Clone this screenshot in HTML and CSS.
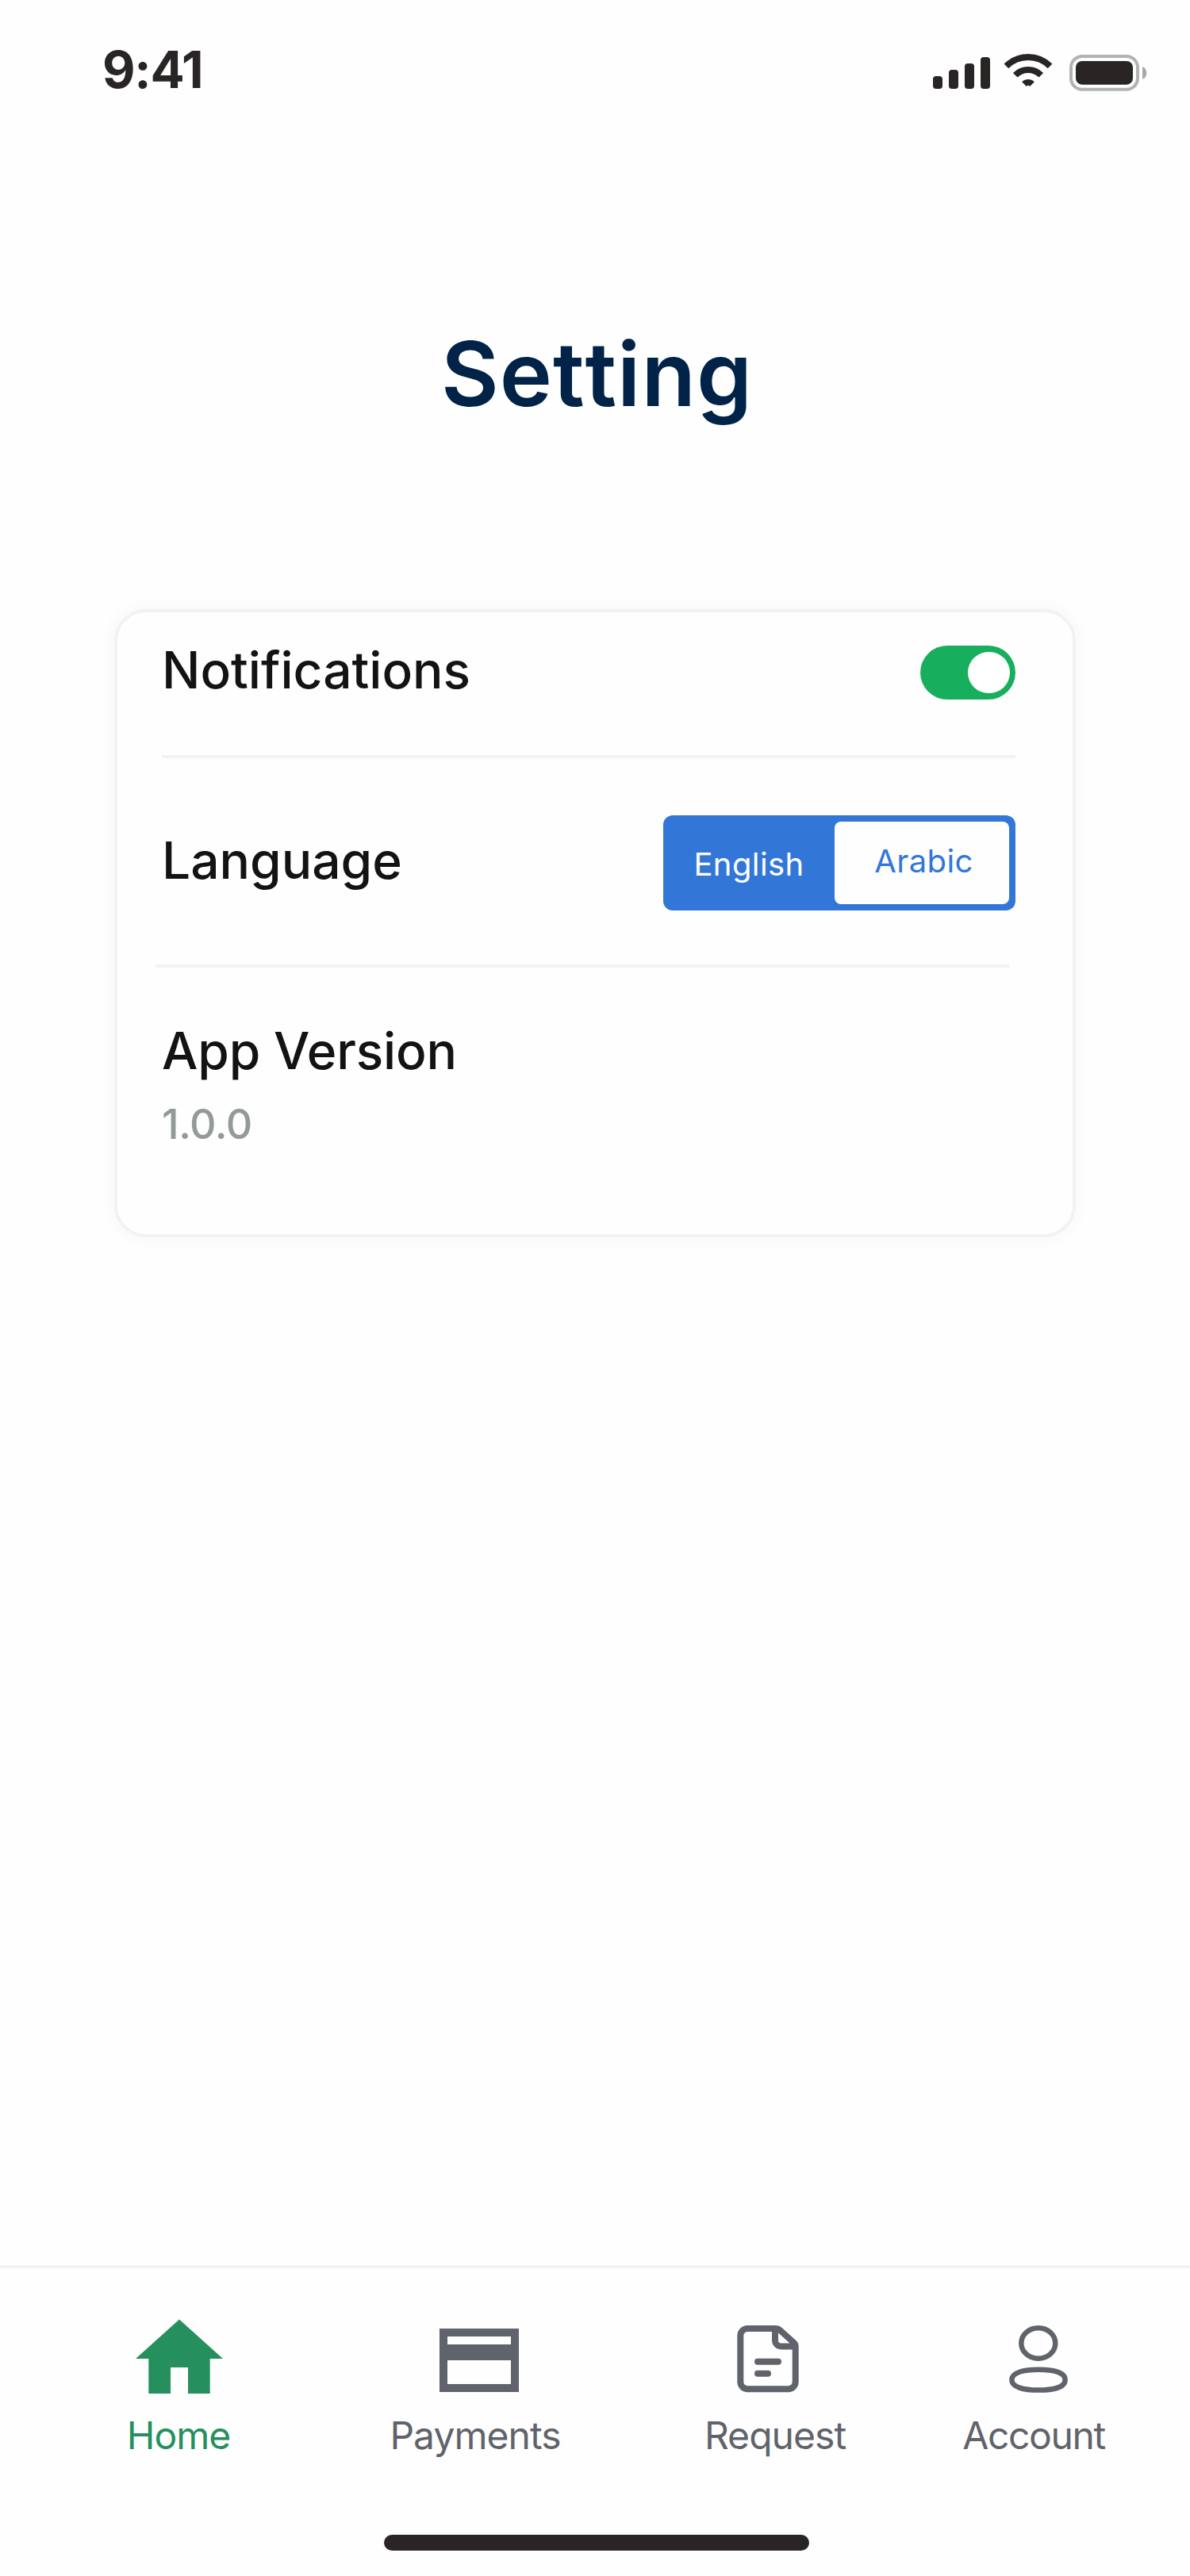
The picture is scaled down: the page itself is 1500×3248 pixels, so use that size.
FILE: index.html
```html
<!DOCTYPE html>
<html lang="en">
<head>
<meta charset="utf-8">
<title>Setting</title>
<link rel="stylesheet" href="styles.css">
</head>
<body>
<div class="screen">
  <header class="status">
    <span class="status-time">9:41</span>
    <svg class="status-icons" viewBox="0 0 272 56" aria-hidden="true">
      <g fill="#292525">
        <rect x="0" y="32" width="12" height="16" rx="4"/>
        <rect x="20" y="24" width="12" height="24" rx="4"/>
        <rect x="40" y="16" width="12" height="32" rx="4"/>
        <rect x="60" y="8" width="12" height="40" rx="4"/>
        <path d="M112.2 39.2A11 11 0 0 1 127.8 39.2L122.1 44.9A3 3 0 0 0 117.9 44.9Z"/>
        <rect x="180" y="13" width="72" height="29.7" rx="8"/>
      </g>
      <g fill="none" stroke="#292525" stroke-width="8">
        <path d="M92.4 19.4A39 39 0 0 1 147.6 19.4"/>
        <path d="M103.7 30.7A23 23 0 0 1 136.3 30.7"/>
      </g>
      <rect x="174" y="7" width="84" height="41.7" rx="14" fill="none" stroke="#b3b2b2" stroke-width="4"/>
      <path d="M264 20A8.7 8.7 0 0 1 264 36Z" fill="#a9a8a8"/>
    </svg>
  </header>

  <h1 class="title">Setting</h1>

  <main class="card">
    <section class="row row-notifications">
      <span class="label">Notifications</span>
      <span class="toggle"><span class="knob"></span></span>
    </section>
    <div class="divider"></div>
    <section class="row row-language">
      <span class="label">Language</span>
      <div class="segmented">
        <span class="segment segment-english">English</span>
        <span class="segment segment-arabic">Arabic</span>
      </div>
    </section>
    <div class="divider divider-offset"></div>
    <section class="version">
      <span class="label label-version">App Version</span>
      <span class="version-number">1.0.0</span>
    </section>
  </main>

  <footer class="footer">
    <nav class="tabs">
      <a class="tab tab-home">
        <svg class="tab-icon" viewBox="0 0 120 96" fill="currentColor"><path d="M61 .5L116 50H99.7V94H72V61H50V94H22.3V50H6Z"/></svg>
        <span>Home</span>
      </a>
      <a class="tab tab-payments">
        <svg class="tab-icon" viewBox="0 0 120 96" fill="currentColor" fill-rule="evenodd"><path d="M15 12H115V92H15ZM25 22V32H105V22ZM25 52V82H105V52Z"/></svg>
        <span>Payments</span>
      </a>
      <a class="tab tab-request">
        <svg class="tab-icon" viewBox="0 0 120 96" fill="none" stroke="currentColor" stroke-width="8" stroke-linecap="round"><path d="M60 12H25.3A9 9 0 0 0 16.3 21V79.3A9 9 0 0 0 25.3 88.3H76.7A9 9 0 0 0 85.7 79.3V35A7 7 0 0 0 83.4 29.6L66.5 14.4A9 9 0 0 0 60 12V27A7.5 7.5 0 0 0 67.5 34.4H85M38 53.7H64M38 68.7H51"/></svg>
        <span>Request</span>
      </a>
      <a class="tab tab-account">
        <svg class="tab-icon" viewBox="0 0 120 96" fill="none" stroke="currentColor" stroke-width="6.5"><ellipse cx="64.8" cy="30.5" rx="21.5" ry="19.3"/><path d="M65 63.8C84 63.8 98.6 67.5 98.6 76.7S84 89.6 65 89.6S31.4 85.9 31.4 76.7S46 63.8 65 63.8Z"/></svg>
        <span>Account</span>
      </a>
    </nav>
    <div class="home-indicator"></div>
  </footer>
</div>
</body>
</html>
```
FILE: styles.css
```css
* {
  box-sizing: border-box;
}

body {
  margin: 0;
  background: #fefefe;
  font-family: Inter, "Liberation Sans", sans-serif;
}

.screen {
  display: flex;
  flex-direction: column;
  width: 1500px;
  height: 3248px;
}

.status {
  display: flex;
  justify-content: space-between;
  padding: 49px 52px 0 129px;
  height: 136px;
}

.status-time {
  font-size: 64px;
  line-height: 77px;
  font-weight: 700;
  letter-spacing: -0.02em;
  color: #292525;
}

.status-icons {
  width: 272px;
  height: 56px;
  margin-top: 15px;
}

.title {
  margin: 267px 0 0;
  padding-left: 5px;
  font-size: 112px;
  line-height: 136px;
  font-weight: 600;
  font-kerning: none;
  letter-spacing: 1px;
  text-align: center;
  color: #012348;
}

.card {
  width: 1212px;
  height: 792px;
  margin: 229px 0 0 144px;
  border: 4px solid #f2f2f2;
  border-radius: 40px;
  box-shadow: 0 0 24px rgba(0, 0, 0, 0.04);
}

.row {
  display: flex;
  justify-content: space-between;
  align-items: flex-start;
  padding: 0 72px 0 56px;
}

.row-notifications {
  height: 180px;
  padding-top: 34px;
}

.row-language {
  height: 260px;
  padding-top: 72px;
}

.row-language .label {
  margin-top: 18px;
}

.label {
  font-size: 64px;
  line-height: 77px;
  font-weight: 500;
  color: #131313;
}

.label-version {
  letter-spacing: -0.15px;
}

.divider {
  height: 4px;
  margin: 0 72px 0 56px;
  background: #f2f2f2;
}

.divider-offset {
  margin: 0 80px 0 48px;
}

.toggle {
  display: flex;
  justify-content: flex-end;
  align-items: center;
  width: 120px;
  height: 68px;
  margin-top: 8px;
  padding-right: 7.5px;
  border-radius: 34px;
  background: #17af5d;
}

.knob {
  width: 52.8px;
  height: 52.8px;
  border-radius: 50%;
  background: #fff;
}

.segmented {
  display: flex;
  width: 444px;
  height: 120px;
  padding: 8px;
  border-radius: 12px;
  background: #3277d8;
}

.segment {
  font-size: 40px;
  line-height: 49px;
  font-weight: 400;
  letter-spacing: 0.01em;
  text-align: center;
}

.segment-english {
  width: 208px;
  padding: 29px 8px 0 0;
  color: #fff;
}

.segment-arabic {
  width: 220px;
  padding: 25px 0 0 5px;
  border-radius: 8px;
  background: #fefefe;
  color: #3277d8;
}

.version {
  display: flex;
  flex-direction: column;
  gap: 23px;
  padding: 66px 56px 0;
}

.version-number {
  font-size: 52px;
  line-height: 63px;
  font-weight: 500;
  letter-spacing: -0.45px;
  color: #949999;
}

.footer {
  margin-top: auto;
  height: 392px;
  border-top: 4px solid #f2f2f2;
}

.tabs {
  display: flex;
  padding: 64px 0 0 160px;
}

.tab {
  display: flex;
  flex-direction: column;
  align-items: center;
  gap: 21px;
  font-size: 48px;
  line-height: 59px;
  font-weight: 400;
  letter-spacing: -0.02em;
  white-space: nowrap;
  color: #60636b;
}

.tab-icon {
  width: 120px;
  height: 96px;
}

.tab-home {
  width: 130px;
  color: #258f5e;
}

.tab-payments {
  width: 214px;
  margin-left: 202px;
}

.tab-request {
  width: 178px;
  margin-left: 182px;
}

.tab-account {
  width: 180px;
  margin-left: 147px;
  letter-spacing: -0.029em;
}

.tab-account .tab-icon {
  margin-left: 2px;
}

.home-indicator {
  width: 536px;
  height: 20px;
  margin: 96px 0 0 484px;
  border-radius: 10px;
  background: #292525;
}
```
